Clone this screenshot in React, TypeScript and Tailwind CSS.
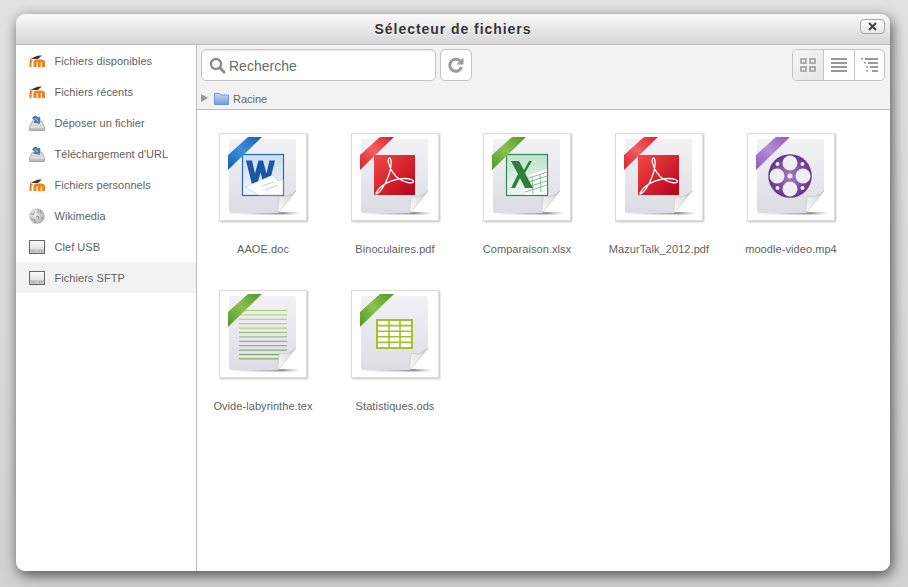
import React from "react";

const font = { fontFamily: '"Liberation Sans", Arial, sans-serif' };

const MoodleIcon = () => (
  <svg width="16" height="16" viewBox="0 0 16 16" className="shrink-0">
    <path d="M4.500 14V9.500C4.500 7.500 6 6.500 7.500 6.500H12.500C14.500 6.500 16 7.500 16 9.500V14H13V9.800c0-.5-.2-.8-.6-.8s-.6.3-.6.8V14H8.800V9.800c0-.5-.2-.8-.6-.8s-.6.3-.6.8V14z" fill="#f0831e" />
    <path d="M.5 14V10c0-2 1-3 3-3.300v2c-.7.2-.9.6-.9 1.300V14z" fill="#f0831e" />
    <path d="M1.500 5.700 8.600 2.800 13 2.500 8.600 6 5.500 6.100z" fill="#333333" />
    <path d="M1.500 5.700v2.500" stroke="#555" strokeWidth="0.7" />
  </svg>
);

const UploadIcon = () => (
  <svg width="16" height="16" viewBox="0 0 16 16" className="shrink-0">
    <defs>
      <linearGradient id="trayGrad" x1="0" y1="0" x2="0" y2="1">
        <stop offset="0" stopColor="#f0f0f0" />
        <stop offset="1" stopColor="#b5b5b5" />
      </linearGradient>
    </defs>
    <path d="M3.500 6h9l3 6v3.500H.5V12z" fill="url(#trayGrad)" stroke="#8f8f8f" strokeWidth="0.7" />
    <path d="M.8 12h14.400" stroke="#fff" strokeWidth="0.7" />
    <path d="M3.500 3.500C4 1.500 6.500.5 8 1.500l1 1.200L11 2l-.3 6.500-6.200-1.300 2-1.500z" fill="#4a7fb8" stroke="#2c5688" strokeWidth="0.5" />
    <path d="M6 3.500 9 6" stroke="#b5d0ec" strokeWidth="1" />
  </svg>
);

const WikiIcon = () => (
  <svg width="16" height="16" viewBox="0 0 16 16" className="shrink-0">
    <defs>
      <radialGradient id="wikiGrad" cx="0.4" cy="0.35" r="0.75">
        <stop offset="0" stopColor="#f4f4f4" />
        <stop offset="1" stopColor="#a6a6a6" />
      </radialGradient>
    </defs>
    <circle cx="8" cy="8" r="7.8" fill="url(#wikiGrad)" />
    <path d="M2 6l2.500.5 1-3M7 9l2-1 1 3.500M11 2l1.500 4M2.500 11l3 .5 1 3.500M9 1v5M12 9l2.500 2" stroke="#7b7b7b" strokeWidth="0.8" fill="none" />
  </svg>
);

const DriveIcon = () => (
  <svg width="16" height="16" viewBox="0 0 16 16" className="shrink-0">
    <defs>
      <linearGradient id="driveGrad" x1="0" y1="0" x2="0" y2="1">
        <stop offset="0" stopColor="#fafafa" />
        <stop offset="1" stopColor="#d5d5d5" />
      </linearGradient>
    </defs>
    <rect x="0.5" y="1.500" width="15" height="13" fill="url(#driveGrad)" stroke="#666" strokeWidth="1" />
    <rect x="1" y="10" width="14" height="4" fill="#c8c8c8" />
    <path d="M2.500 12h4M10 12h3.500" stroke="#888" strokeWidth="1" strokeDasharray="1 1" />
  </svg>
);

const sidebarItems = [
  { name: "Fichiers disponibles", icon: <MoodleIcon /> },
  { name: "Fichiers récents", icon: <MoodleIcon /> },
  { name: "Déposer un fichier", icon: <UploadIcon /> },
  { name: "Téléchargement d'URL", icon: <UploadIcon /> },
  { name: "Fichiers personnels", icon: <MoodleIcon /> },
  { name: "Wikimedia", icon: <WikiIcon /> },
  { name: "Clef USB", icon: <DriveIcon /> },
  { name: "Fichiers SFTP", icon: <DriveIcon />, active: true },
];

const ribbons = {
  blue: ["#3d8fdc", "#145fae"],
  red: ["#f2605f", "#d9222a"],
  green: ["#8cc152", "#4e9a24"],
  purple: ["#b78ad8", "#8d5db5"],
};

type Kind = "word" | "pdf" | "excel" | "video" | "text" | "sheet";

const WordArt = () => (
  <g>
    <rect x="23.500" y="21.500" width="41" height="41" fill="url(#wordFill)" stroke="#2d69ad" strokeWidth="1.200" />
    <path d="M27 27.500h6l3 13 3.500-13h4.500l3.500 13 3-13H56l-6 24h-5.500l-3-12-3.200 12H33z" fill="#1b57a5" />
    <path d="M26 54 47 45l7-3 5 6 5-2v16H40z" fill="#fff" stroke="#b8cbe0" strokeWidth="0.6" />
    <path d="M43 53l12-4M46 57l13-5" stroke="#a8c0da" strokeWidth="0.8" />
  </g>
);

const PdfArt = () => (
  <g>
    <rect x="23" y="22" width="41" height="40" fill="url(#pdfFill)" />
    <path
      d="M25 61c4-1 9-9 12-17 2.500-6 4-15 2.500-18-1.200-2-2.800 0-2.200 3 1 6 6 14 11 17 4.500 2.800 12 5 14 3 1.500-1.500-3-3.500-9-3.500-8 0-18 3.500-23 8-3.500 3.200-6 7-5.300 7.500z"
      fill="none"
      stroke="#ffffff"
      strokeWidth="1.300"
    />
  </g>
);

const ExcelArt = () => (
  <g>
    <rect x="23.500" y="21.500" width="41" height="41" fill="url(#excelFill)" stroke="#2f8a5b" strokeWidth="1.200" />
    <path d="M38 45l26-9v25l-22 1z" fill="#fff" />
    <path d="M40 47l24-8M40 51l24-8M41 55l23-7M42 59l22-7M49 44l1 17M57 41l1 18" stroke="#7fc094" strokeWidth="1" />
    <path d="M28 28h8l5 9 5-9h3L42 40l8 15h-8l-5-10-5 10h-4l7-14z" fill="#2f7f3a" />
  </g>
);

const VideoArt = () => (
  <g>
    <circle cx="43" cy="43" r="21.800" fill="url(#videoFill)" />
    <circle cx="43" cy="30" r="7.500" fill="#f0edf4" />
    <circle cx="43" cy="56" r="7.500" fill="#f0edf4" />
    <circle cx="30" cy="43" r="7.500" fill="#f0edf4" />
    <circle cx="56" cy="43" r="7.500" fill="#f0edf4" />
    <circle cx="43" cy="43" r="2.500" fill="#f0edf4" />
    <circle cx="30.500" cy="31" r="2" fill="#f0edf4" />
    <circle cx="55.500" cy="31" r="2" fill="#f0edf4" />
    <circle cx="30.500" cy="55" r="2" fill="#f0edf4" />
    <circle cx="55.500" cy="55" r="2" fill="#f0edf4" />
  </g>
);

const textLines = [
  "#a9cf6e", "#a9cf6e", "#a9cf6e", "#a9cf6e", "#a2c86a", "#9dbe6c",
  "#8fae7a", "#8c9a80", "#8c9a80", "#7b9270", "#7ba160", "#6fa04d",
];

const TextArt = () => (
  <g strokeWidth="1">
    {textLines.map((c, i) => (
      <path key={i} d={`M20 ${20.5 + i * 4.4}H${i > 9 ? 62 : 68}`} stroke={c} />
    ))}
  </g>
);

const SheetArt = () => (
  <g>
    <rect x="26" y="30" width="35" height="28" fill="#fff" stroke="#a4c02c" strokeWidth="2" />
    <path d="M38 30v28M49 30v28M26 35.600h35M26 41.200h35M26 46.800h35M26 52.400h35" stroke="#a4c02c" strokeWidth="1.600" />
  </g>
);

// shared gradients for every file icon
const IconDefs = () => (
  <svg width="0" height="0" className="absolute">
    <defs>
      <linearGradient id="pageFill" x1="0" y1="0" x2="0" y2="1">
        <stop offset="0" stopColor="#f2f2f5" />
        <stop offset="1" stopColor="#dcdde4" />
      </linearGradient>
      <linearGradient id="pdfFill" x1="0" y1="0" x2="1" y2="1">
        <stop offset="0" stopColor="#f44a46" />
        <stop offset="1" stopColor="#b5001a" />
      </linearGradient>
      <linearGradient id="wordFill" x1="0" y1="0" x2="0" y2="1">
        <stop offset="0" stopColor="#c9dcef" />
        <stop offset="1" stopColor="#f2f6fb" />
      </linearGradient>
      <linearGradient id="excelFill" x1="0" y1="0" x2="0" y2="1">
        <stop offset="0" stopColor="#bfe2cb" />
        <stop offset="1" stopColor="#eef8f1" />
      </linearGradient>
      <radialGradient id="videoFill" cx="0.5" cy="0.5" r="0.55">
        <stop offset="0" stopColor="#a27fbf" />
        <stop offset="1" stopColor="#5f2f87" />
      </radialGradient>
      <linearGradient id="pageShade" x1="0" y1="0" x2="1" y2="0">
        <stop offset="0" stopColor="#888" stopOpacity="0" />
        <stop offset="0.75" stopColor="#666" stopOpacity="0.7" />
        <stop offset="1" stopColor="#888" stopOpacity="0" />
      </linearGradient>
      <linearGradient id="curlFill" x1="0" y1="1" x2="1" y2="0">
        <stop offset="0" stopColor="#ffffff" />
        <stop offset="0.6" stopColor="#e4e4e4" />
        <stop offset="1" stopColor="#bcbcbc" />
      </linearGradient>
      {Object.entries(ribbons).map(([name, rib]) => (
        <linearGradient key={name} id={`rib-${name}`} x1="0" y1="1" x2="1" y2="0">
          <stop offset="0" stopColor={rib[1]} />
          <stop offset="0.5" stopColor={rib[0]} />
          <stop offset="1" stopColor={rib[1]} />
        </linearGradient>
      ))}
    </defs>
  </svg>
);

const FileIcon = ({ kind }: { kind: Kind }) => {
  const color = kind === "word" ? "blue" : kind === "pdf" ? "red" : kind === "video" ? "purple" : "green";
  return (
    <div className="h-[88px] w-[88px] border border-[#dcdcdc] bg-white shadow-[1px_1px_2px_rgba(0,0,0,0.25)]">
      <svg width="86" height="86" viewBox="1 1 86 86">
        <rect x="10" y="79" width="71" height="2.500" fill="url(#pageShade)" />
        <path d="M12 6h63a2 2 0 0 1 2 2v50L59 80H12a2 2 0 0 1-2-2V8a2 2 0 0 1 2-2z" fill="url(#pageFill)" />
        {kind === "word" && <WordArt />}
        {kind === "pdf" && <PdfArt />}
        {kind === "excel" && <ExcelArt />}
        {kind === "video" && <VideoArt />}
        {kind === "text" && <TextArt />}
        {kind === "sheet" && <SheetArt />}
        <path d="M77 58 59 80c0-6 .5-14 1.500-17 5 2 11 0 16.500-5z" fill="url(#curlFill)" stroke="#b8b8b8" strokeWidth="0.5" />
        <path d="M9 22 29 4h14L9 37z" fill={`url(#rib-${color})`} />
      </svg>
    </div>
  );
};

const files: { name: string; kind: Kind }[] = [
  { name: "AAOE.doc", kind: "word" },
  { name: "Binoculaires.pdf", kind: "pdf" },
  { name: "Comparaison.xlsx", kind: "excel" },
  { name: "MazurTalk_2012.pdf", kind: "pdf" },
  { name: "moodle-video.mp4", kind: "video" },
  { name: "Ovide-labyrinthe.tex", kind: "text" },
  { name: "Statistiques.ods", kind: "sheet" },
];

const Sidebar = () => (
  <aside className="w-[181px] shrink-0 border-r border-[#bbbbbb] bg-white">
    {sidebarItems.map((item) => (
      <div
        key={item.name}
        className={`flex h-[31px] items-center gap-[9.5px] pl-[13px] text-[11px] tracking-[0.05px] text-[#5f5f5f] ${item.active ? "bg-[#f2f2f2]" : ""}`}
      >
        {item.icon}
        <span className="relative top-[1px]">{item.name}</span>
      </div>
    ))}
  </aside>
);

const Toolbar = () => (
  <div className="h-[65px] shrink-0 border-b border-[#bbbbbb] bg-[#f2f2f2]">
    <div className="flex items-center pl-1 pr-[5px] pt-1">
      <div className="flex h-8 w-[235px] items-center gap-[3px] rounded-[5px] border border-[#c4c4c4] bg-white pl-[7px] shadow-[inset_0_1px_1px_rgba(0,0,0,0.08)]">
        <svg width="17" height="17" viewBox="0 0 17 17" fill="none" stroke="#8c8c8c">
          <circle cx="7" cy="7" r="5" strokeWidth="2.5" />
          <path d="M10.8 10.800 15 15" strokeWidth="3" strokeLinecap="round" />
        </svg>
        <span className="relative top-[1px] text-[14px] text-[#6b6b6b]">Recherche</span>
      </div>
      <button className="ml-1 flex h-8 w-8 items-center justify-center rounded-[5px] border border-[#c4c4c4] bg-white">
        <svg width="18" height="18" viewBox="0 0 18 18" fill="none">
          <path d="M14.5 11a6 6 0 1 1-1.500-6" stroke="#999999" strokeWidth="3" />
          <path d="M16.500 1.500v7h-7z" fill="#999999" />
        </svg>
      </button>
      <div className="ml-auto flex h-8 overflow-hidden rounded-[5px] border border-[#c4c4c4] bg-white">
        <div className="flex w-[31px] items-center justify-center border-r border-[#c4c4c4] bg-gradient-to-br from-[#f5f5f5] to-[#e6e6e6]">
          <svg width="16" height="14" viewBox="0 0 16 14" fill="none" stroke="#999999" strokeWidth="1.500">
            <rect x="1" y="1" width="5" height="4" />
            <rect x="10" y="1" width="5" height="4" />
            <rect x="1" y="9" width="5" height="4" />
            <rect x="10" y="9" width="5" height="4" />
          </svg>
        </div>
        <div className="flex w-[31px] items-center justify-center border-r border-[#c4c4c4]">
          <svg width="16" height="14" viewBox="0 0 16 14" fill="#999999">
            <rect y="0" width="16" height="2" />
            <rect y="4" width="16" height="2" />
            <rect y="8" width="16" height="2" />
            <rect y="12" width="16" height="2" />
          </svg>
        </div>
        <div className="flex w-[29px] items-center justify-center">
          <svg width="17" height="14" viewBox="0 0 17 14" fill="#999999">
            <rect x="0" y="0" width="2" height="1.5" />
            <rect x="4" y="0" width="13" height="2" />
            <rect x="3" y="4" width="2" height="1.5" />
            <rect x="7" y="4" width="10" height="2" />
            <rect x="5" y="8" width="2" height="1.5" />
            <rect x="9" y="8" width="8" height="2" />
            <rect x="5" y="12" width="2" height="1.5" />
            <rect x="11" y="12" width="6" height="2" />
          </svg>
        </div>
      </div>
    </div>
    <div className="mt-[9px] flex items-center pl-1">
      <svg width="7" height="8" viewBox="0 0 7 8">
        <path d="M0 0 7 4 0 8z" fill="#999999" />
      </svg>
      <svg width="15" height="13" viewBox="0 0 15 13" className="ml-[6px]">
        <defs>
          <linearGradient id="folderGrad" x1="0" y1="0" x2="0" y2="1">
            <stop offset="0" stopColor="#c6daf2" />
            <stop offset="1" stopColor="#6f9cd8" />
          </linearGradient>
        </defs>
        <path d="M.5 12.500V1.500h5l1.500 1.500h7.500v9.500z" fill="url(#folderGrad)" stroke="#5a86c2" strokeWidth="0.8" />
      </svg>
      <span className="relative top-[0.5px] ml-1 text-[11px] text-[#666666]">Racine</span>
    </div>
  </div>
);

const FileGrid = () => (
  <div className="grid flex-1 grid-cols-[repeat(5,132px)] content-start bg-white pt-[23px]">
    {files.map((f) => (
      <div key={f.name} className="flex h-[157px] flex-col items-center">
        <FileIcon kind={f.kind} />
        <div className="mt-[22px] text-[11px] leading-[13px] tracking-[0.07px] text-[#5f5f5f]">{f.name}</div>
      </div>
    ))}
  </div>
);

export default function App() {
  return (
    <div
      className="h-[587px] w-[908px] overflow-hidden bg-gradient-to-b from-[#e2e2e2] to-[#d2d2d2] pl-4 pt-[14px]"
      style={font}
    >
      <IconDefs />
      <div className="flex h-[557px] w-[874px] flex-col overflow-hidden rounded-[9px] shadow-[2px_4px_14px_rgba(0,0,0,0.65)]">
        <header className="relative flex h-[31px] shrink-0 items-center justify-center border-b border-[#bbbbbb] bg-gradient-to-b from-[#fafafa] to-[#d6d6d6]">
          <h1 className="text-[14px] font-bold tracking-[0.95px] text-[#333333] [text-shadow:0_1px_0_#ffffff]">
            Sélecteur de fichiers
          </h1>
          <button className="absolute right-[5px] top-[5px] flex h-[15px] w-[25px] items-center justify-center rounded-[4px] border border-[#a5a5a5] bg-gradient-to-b from-[#ffffff] to-[#e6e6e6]">
            <svg width="9" height="9" viewBox="0 0 9 9" stroke="#444" strokeWidth="2">
              <path d="M1 1 8 8M8 1 1 8" />
            </svg>
          </button>
        </header>
        <div className="flex min-h-0 flex-1">
          <Sidebar />
          <main className="flex min-w-0 flex-1 flex-col">
            <Toolbar />
            <FileGrid />
          </main>
        </div>
      </div>
    </div>
  );
}
